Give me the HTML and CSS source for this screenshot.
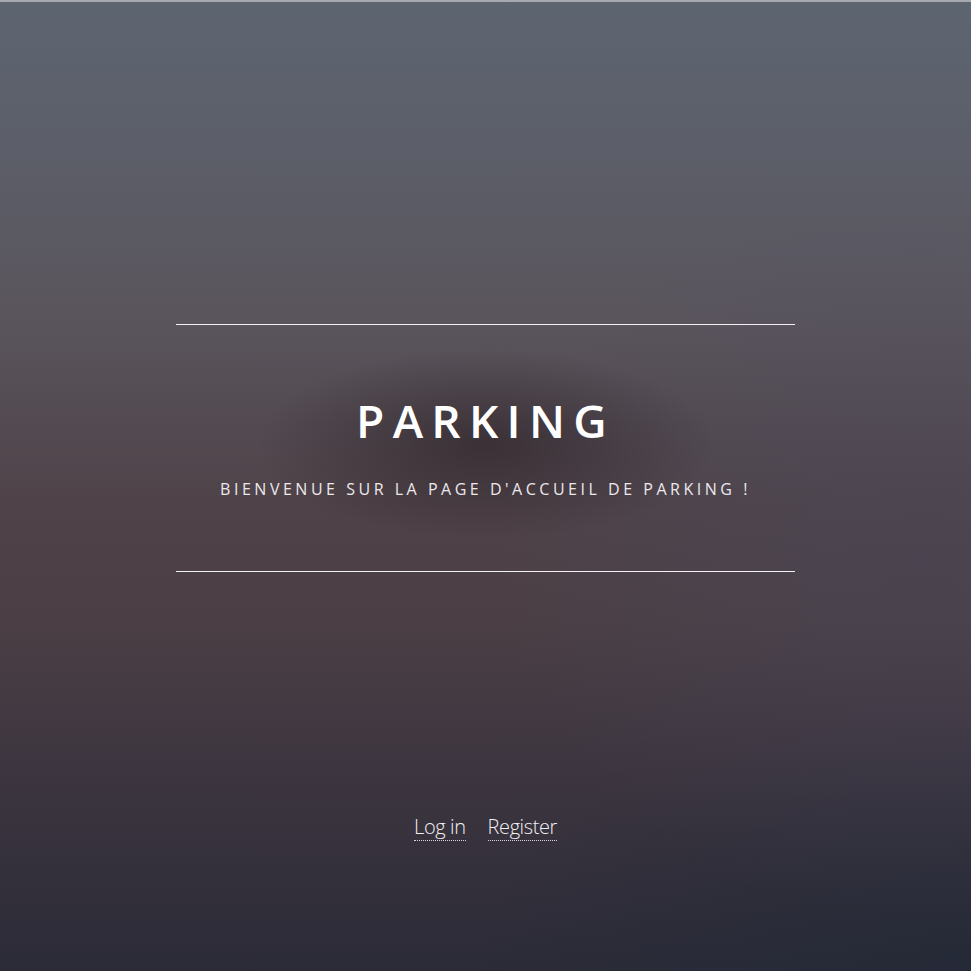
FILE: index.html
```html
<!DOCTYPE html>
<html lang="fr">
<head>
<meta charset="utf-8">
<title>Parking</title>
<link rel="stylesheet" href="styles.css">
</head>
<body>
<div class="page">
  <header class="banner">
    <h1 class="title">PARKING</h1>
    <p class="subtitle">BIENVENUE SUR LA PAGE D'ACCUEIL DE PARKING !</p>
  </header>
  <nav class="auth">
    <a class="auth-link" href="#">Log in</a>
    <a class="auth-link" href="#">Register</a>
  </nav>
</div>
</body>
</html>
```
FILE: styles.css
```css
html, body {
  margin: 0;
  padding: 0;
  height: 100%;
}
body {
  font-family: "Open Sans", "Noto Sans", sans-serif;
  color: #fff;
  background-color: #4a4248;
  background-image:
    radial-gradient(ellipse 230px 95px at 486px 445px, rgba(38, 28, 34, 0.55), rgba(38, 28, 34, 0) 100%),
    radial-gradient(ellipse 420px 360px at 920px 560px, rgba(70, 75, 100, 0.3), rgba(70, 75, 100, 0) 100%),
    radial-gradient(ellipse 500px 260px at 971px 971px, rgba(30, 40, 55, 0.5), rgba(30, 40, 55, 0) 100%),
    linear-gradient(to bottom, #5d6571 0%, #5c606b 12%, #5a555d 32%, #4f4349 52%, #4b3f45 64%, #3e3640 78%, #2b2b37 100%);
  background-repeat: no-repeat;
}
.page {
  min-height: 969px;
  border-top: 2px solid #a7a9b0;
  display: flex;
  flex-direction: column;
  align-items: center;
}
.banner {
  margin-top: 322px;
  width: 619px;
  height: 246px;
  border-top: 1px solid #f4f2f4;
  border-bottom: 1px solid #f4f2f4;
  text-align: center;
  box-sizing: content-box;
}
.title {
  margin: 64px 0 0;
  font-size: 46px;
  font-weight: 600;
  letter-spacing: 0.18em;
  line-height: 62px;
}
.subtitle {
  margin: 27px 0 0;
  font-size: 16px;
  font-weight: 400;
  letter-spacing: 0.22em;
  color: #ece8ec;
}
.auth {
  margin-top: 242px;
  display: flex;
  gap: 22px;
}
.auth-link {
  color: #f2f0f3;
  text-decoration: none;
  font-size: 20px;
  font-weight: 300;
  letter-spacing: -0.02em;
  border-bottom: 1px dotted #d8d4da;
  line-height: 26px;
}
```
